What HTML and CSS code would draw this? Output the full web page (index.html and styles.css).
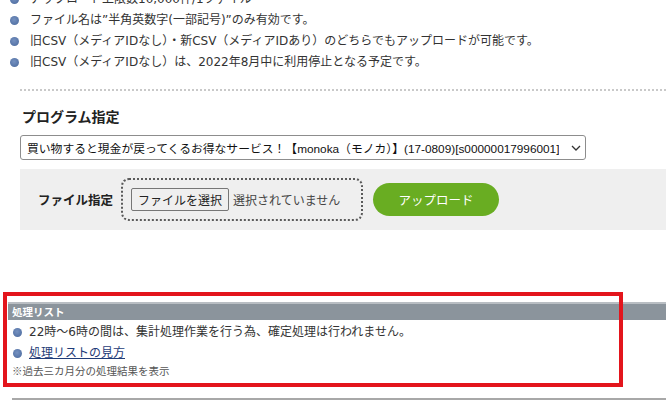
FILE: index.html
```html
<!DOCTYPE html>
<html lang="ja">
<head>
<meta charset="utf-8">
<title>アップロード</title>
<link rel="stylesheet" href="styles.css">
</head>
<body>
<div class="page">
  <ul class="notes">
    <li>アップロード上限数10,000件/1ファイル</li>
    <li>ファイル名は”半角英数字(一部記号)”のみ有効です。</li>
    <li>旧CSV（メディアIDなし）・新CSV（メディアIDあり）のどちらでもアップロードが可能です。</li>
    <li>旧CSV（メディアIDなし）は、2022年8月中に利用停止となる予定です。</li>
  </ul>

  <div class="upload-section">
    <h2 class="sec-title">プログラム指定</h2>
    <div class="select">
      <span class="select-text">買い物すると現金が戻ってくるお得なサービス！【monoka（モノカ）】(17-0809)[s00000017996001]</span>
      <svg class="chev" width="10" height="6" viewBox="0 0 10 6"><polyline points="1,1 5,5 9,1" fill="none" stroke="#333" stroke-width="1.3"/></svg>
    </div>
    <div class="file-row">
      <span class="file-label">ファイル指定</span>
      <div class="file-box">
        <span class="file-btn">ファイルを選択</span>
        <span class="file-status">選択されていません</span>
      </div>
      <span class="upload-btn">アップロード</span>
    </div>
  </div>

  <div class="result">
    <div class="bar">処理リスト</div>
    <ul class="notes notes-result">
      <li>22時～6時の間は、集計処理作業を行う為、確定処理は行われません。</li>
      <li><a class="link" href="#">処理リストの見方</a></li>
    </ul>
    <p class="small">※過去三カ月分の処理結果を表示</p>
    <div class="highlight"></div>
  </div>

  <div class="bottom-bar"></div>
</div>
</body>
</html>
```

FILE: styles.css
```css
html, body {
  margin: 0;
  padding: 0;
  background: #fff;
  overflow: hidden;
}
body {
  font-family: "DejaVu Sans", "Noto Sans CJK JP", sans-serif;
  font-size: 12px;
  color: #333;
}
.page {
  padding-left: 8px;
}
.notes {
  list-style: none;
  margin: -11px 0 0;
  padding: 0;
}
.notes li {
  display: flex;
  align-items: center;
  line-height: 21px;
  height: 21px;
  white-space: nowrap;
}
.notes li::before {
  content: "";
  flex: none;
  width: 9px;
  height: 9px;
  border-radius: 50%;
  background: radial-gradient(circle at 45% 40%, #7591c0 0%, #5a78aa 60%, #4a689b 100%);
  margin-left: 2px;
  margin-right: 11px;
}
.upload-section {
  margin-top: 16px;
  margin-left: 12px;
  border-top: 2px dotted #c9c9c9;
  padding-top: 15px;
}
.sec-title {
  margin: 0;
  font-family: "Noto Sans CJK JP", sans-serif;
  font-size: 14px;
  font-weight: 700;
  line-height: 20px;
  color: #222;
  padding-left: 2px;
}
.select {
  margin-top: 9px;
  width: 566px;
  height: 25px;
  box-sizing: border-box;
  border: 1px solid #8d8d8d;
  border-radius: 3px;
  display: flex;
  align-items: center;
  justify-content: space-between;
  padding: 0 4px 0 6px;
  font-family: "Liberation Sans", "Noto Sans CJK JP", sans-serif;
  font-size: 11.8px;
  color: #111;
  white-space: nowrap;
}
.select-text {
  min-width: 0;
  overflow: hidden;
}
.chev {
  flex: none;
  margin-left: 6px;
}
.file-row {
  margin-top: 9px;
  background: #efefef;
  height: 61px;
  box-sizing: border-box;
  padding: 9px 0 9px 18px;
  display: flex;
  align-items: center;
}
.file-label {
  font-family: "Noto Sans CJK JP", sans-serif;
  font-size: 12.5px;
  font-weight: 700;
  color: #222;
  margin-right: 8px;
}
.file-box {
  width: 242px;
  height: 43px;
  box-sizing: border-box;
  border: 2px dotted #5a5a5a;
  border-radius: 8px;
  padding: 0 8px;
  display: flex;
  align-items: center;
  font-family: "Noto Sans CJK JP", sans-serif;
  font-size: 12px;
}
.file-btn {
  height: 23px;
  box-sizing: border-box;
  border: 1px solid #767676;
  border-radius: 2px;
  background: #efefef;
  padding: 0 6px;
  line-height: 21px;
  color: #222;
}
.file-status {
  margin-left: 4px;
  color: #444;
}
.upload-btn {
  margin-left: 10px;
  width: 126px;
  height: 33px;
  border-radius: 17px;
  background: #69ad22;
  color: #fff;
  font-family: "Noto Sans CJK JP", sans-serif;
  font-size: 12.5px;
  display: flex;
  align-items: center;
  justify-content: center;
}
.result {
  position: relative;
  margin-top: 72px;
}
.bar {
  height: 18px;
  box-sizing: border-box;
  border-top: 2px solid #b9bec3;
  background: #8b949c;
  color: #fff;
  font-family: "Noto Sans CJK JP", sans-serif;
  font-size: 10.5px;
  font-weight: 700;
  line-height: 16px;
  padding-left: 4px;
}
.notes-result {
  margin-top: 1.5px;
}
.notes-result li::before {
  margin-left: 5px;
  margin-right: 7px;
}
.link {
  color: #1f3c78;
  text-decoration: underline;
}
.small {
  margin: 0;
  padding-left: 4px;
  font-family: "Noto Sans CJK JP", sans-serif;
  font-size: 10.5px;
  line-height: 14px;
  color: #555;
}
.highlight {
  position: absolute;
  top: -10px;
  left: -5px;
  width: 620px;
  height: 95px;
  box-sizing: border-box;
  border: 4px solid #e3151c;
  pointer-events: none;
}
.bottom-bar {
  margin-top: 20.5px;
  margin-left: 4px;
  height: 2px;
  background: #a8a8a8;
}
```
